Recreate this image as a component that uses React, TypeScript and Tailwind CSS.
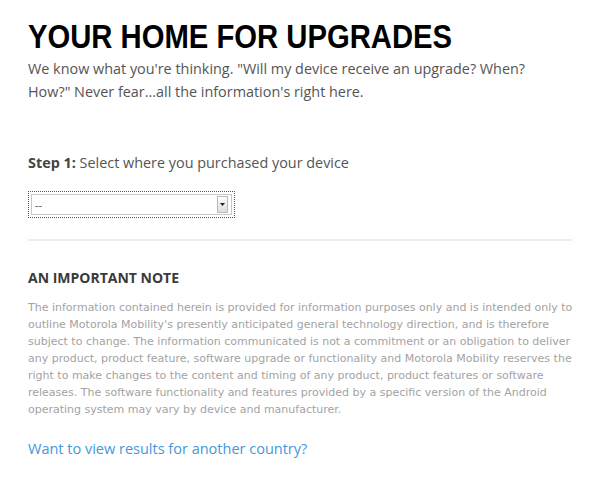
export default function App() {
  return (
    <div className="min-h-[483px] bg-white px-7 pt-[19px] font-['Open_Sans',sans-serif]">
      <h1 className="origin-left scale-x-[0.86] whitespace-nowrap font-['Liberation_Sans',Arial,sans-serif] text-[34px] font-bold leading-[34px] text-black">
        YOUR HOME FOR UPGRADES
      </h1>
      <p className="mt-[4px] w-[530px] text-[14.4px] leading-[23px] text-[#555]">
        We know what you're thinking. "Will my device receive an upgrade? When?
        How?" Never fear...all the information's right here.
      </p>

      <p className="mt-[49px] text-[14.4px] leading-[22px] text-[#555]">
        <span className="font-bold text-[#444]">Step 1:</span> Select where you
        purchased your device
      </p>

      <div className="mt-[17px] flex h-[27px] w-[207px] border border-dotted border-[#555] p-[2px]">
        <div className="flex flex-1 items-center justify-between border border-[#c8c8c8] bg-white pl-[3px] pr-[3px]">
          <span className="text-[11px] leading-none text-[#555]">--</span>
          <div className="flex h-[17px] w-[11px] items-center justify-center border border-[#bbb] bg-gradient-to-b from-white to-[#ddd]">
            <svg width="5" height="3" viewBox="0 0 5 3">
              <path d="M0 0h5L2.5 3z" fill="#222" />
            </svg>
          </div>
        </div>
      </div>

      <div className="mt-[21px] h-[2px] w-[544px] bg-[#ececec]" />

      <h2 className="mt-[27px] text-[14px] font-bold leading-[20px] text-[#3a3a3a]">
        AN IMPORTANT NOTE
      </h2>
      <p className="mt-[11px] w-[546px] font-['DejaVu_Sans',Verdana,sans-serif] text-[11px] leading-[17px] text-[#a3a3a3]">
        The information contained herein is provided for information purposes
        only and is intended only to outline Motorola Mobility's presently
        anticipated general technology direction, and is therefore subject to
        change. The information communicated is not a commitment or an
        obligation to deliver any product, product feature, software upgrade or
        functionality and Motorola Mobility reserves the right to make changes
        to the content and timing of any product, product features or software
        releases. The software functionality and features provided by a
        specific version of the Android operating system may vary by device and
        manufacturer.
      </p>

      <a className="mt-[20px] block text-[14.5px] leading-[22px] text-[#4399de]" href="#">
        Want to view results for another country?
      </a>
    </div>
  );
}
